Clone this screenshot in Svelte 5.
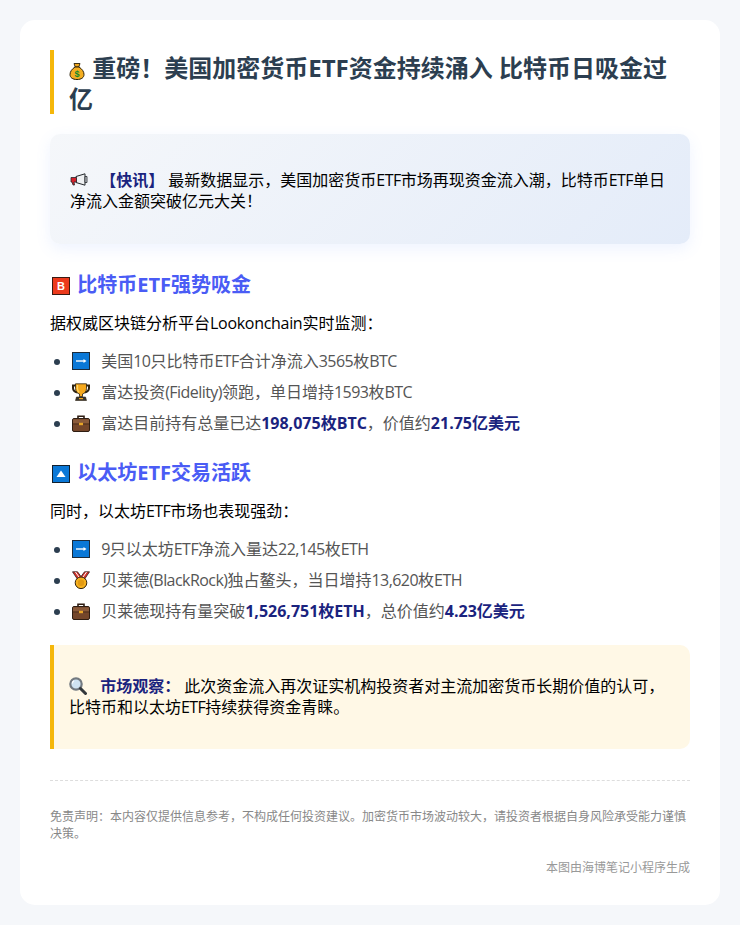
<script>
  const bullets1 = [
    { icon: 'arrow', html: '美国<span class="l">10</span>只比特币<span class="l">ETF</span>合计净流入<span class="l">3565</span>枚<span class="l">BTC</span>' },
    { icon: 'trophy', html: '富达投资<span class="l">(Fidelity)</span>领跑，单日增持<span class="l">1593</span>枚<span class="l">BTC</span>' },
    { icon: 'case', html: '富达目前持有总量已达<strong>198,075枚BTC</strong>，价值约<strong>21.75亿美元</strong>' }
  ];
  const bullets2 = [
    { icon: 'arrow', html: '<span class="l">9</span>只以太坊<span class="l">ETF</span>净流入量达<span class="l">22,145</span>枚<span class="l">ETH</span>' },
    { icon: 'medal', html: '贝莱德<span class="l">(BlackRock)</span>独占鳌头，当日增持<span class="l">13,620</span>枚<span class="l">ETH</span>' },
    { icon: 'case', html: '贝莱德现持有量突破<strong>1,526,751枚ETH</strong>，总价值约<strong>4.23亿美元</strong>' }
  ];
</script>

{#snippet icon(name)}
  {#if name === 'arrow'}
    <svg class="emoji" viewBox="0 0 18 18"><rect x="0.500" y="0.500" width="17" height="17" fill="#0a78d7" stroke="#1c2b3a"/><path d="M4 9h9" stroke="#fff" stroke-width="1.400"/><path d="M11.500 7 14.500 9 11.500 11z" fill="#fff"/></svg>
  {:else if name === 'trophy'}
    <svg class="emoji" viewBox="0 0 18 18"><path d="M4 2.500H1v2.500c0 2.500 2 4 4.500 4.500M14 2.500h3v2.500c0 2.500-2 4-4.500 4.500" fill="none" stroke="#2b2110" stroke-width="2"/><path d="M3.500 .8h11v4.700c0 3-2 5-4 5.500v2.700h-3V11c-2-.5-4-2.500-4-5.500z" fill="#f5a81c" stroke="#2b2110" stroke-width=".8"/><path d="M5.500 2v3.500c0 1.700.7 2.800 1.500 3.700" fill="none" stroke="#ffd766" stroke-width="1.300"/><path d="M4.500 14h9l1 3.500h-11z" fill="#3a3630" stroke="#2b2110" stroke-width=".6"/><path d="M7 15h4v1.200H7z" fill="#f5a81c"/></svg>
  {:else if name === 'case'}
    <svg class="emoji" viewBox="0 0 18 18"><path d="M6 5V2.200h6V5" fill="none" stroke="#2e1d12" stroke-width="1.600"/><rect x="0.500" y="4.500" width="17" height="13" rx="1.500" fill="#74462a" stroke="#2e1d12"/><path d="M1 5.500h16v4H1z" fill="#8a5a3a"/><path d="M1 10h16" stroke="#4e2e1b"/><rect x="7" y="8.800" width="4" height="2.400" fill="#e8a628"/></svg>
  {:else if name === 'medal'}
    <svg class="emoji" viewBox="0 0 18 18"><path d="M.5 .8h5L9 5.500l3.500-4.700h5L12 9H6z" fill="#d8322a" stroke="#2a1d1d" stroke-width=".8"/><path d="M3.500 1 8 7.500M14.500 1 10 7.500" stroke="#fff" stroke-width="1"/><circle cx="9" cy="11.800" r="5.800" fill="#f7b21f" stroke="#33230d"/><circle cx="9" cy="11.800" r="3.200" fill="#e39a12"/></svg>
  {:else if name === 'bag'}
    <svg class="emoji small" viewBox="0 0 16 18"><path d="M5 1.500h6L9.800 5H6.200z" fill="#f0a81f" stroke="#2a2008" stroke-width=".9"/><path d="M6 5h4c3 2 5 4.500 5 7.500 0 3-2.500 5-7 5s-7-2-7-5C1 9.500 3 7 6 5z" fill="#f4ae21" stroke="#2a2008"/><text x="8" y="15" class="dollar" text-anchor="middle">$</text></svg>
  {:else if name === 'horn'}
    <svg class="emoji horn" viewBox="0 0 18 14"><path d="M6 3.500 15 .8v11.400L6 9.500z" fill="#eef0f2" stroke="#23272b"/><path d="M1 4.500h5.500v4.500H4l.5 3H3L2 9H1z" fill="#d4212c" stroke="#23272b" stroke-width=".8"/><path d="M15 3.500h2v6h-2z" fill="#c8cdd2" stroke="#23272b" stroke-width=".8"/></svg>
  {:else if name === 'lens'}
    <svg class="emoji lens" viewBox="0 0 18 18"><circle cx="7" cy="7" r="5.700" fill="#cfe3f2" stroke="#737a80" stroke-width="2.200"/><path d="M5 3.800c-1 .5-1.700 1.500-1.700 2.700" stroke="#fff" fill="none" stroke-width="1.200"/><path d="m11.500 11.500 5 5" stroke="#33383c" stroke-width="3" stroke-linecap="round"/></svg>
  {:else if name === 'b'}
    <svg class="emoji h2e" viewBox="0 0 18 18"><rect x="0.500" y="0.500" width="17" height="17" fill="#ec3a1c" stroke="#3a1a12"/><text x="9" y="13" class="btn" text-anchor="middle">B</text></svg>
  {:else if name === 'up'}
    <svg class="emoji h2e" viewBox="0 0 18 18"><rect x="0.500" y="0.500" width="17" height="17" fill="#0a78d7" stroke="#12202e"/><path d="M9 5.500 13.500 12h-9z" fill="#fff"/></svg>
  {/if}
{/snippet}

<div class="card">
  <h1>{@render icon('bag')} 重磅！美国加密货币ETF资金持续涌入 比特币日吸金过亿</h1>

  <div class="highlight">
    <p>{@render icon('horn')} <strong>【快讯】</strong> 最新数据显示，美国加密货币<span class="l">ETF</span>市场再现资金流入潮，比特币<span class="l">ETF</span>单日净流入金额突破亿元大关！</p>
  </div>

  <h2>{@render icon('b')} 比特币ETF强势吸金</h2>
  <p class="lead">据权威区块链分析平台<span class="lw">Lookonchain</span>实时监测：</p>
  <ul>
    {#each bullets1 as b}
      <li>{@render icon(b.icon)} {@html b.html}</li>
    {/each}
  </ul>

  <h2 class="next">{@render icon('up')} 以太坊ETF交易活跃</h2>
  <p class="lead">同时，以太坊<span class="l">ETF</span>市场也表现强劲：</p>
  <ul>
    {#each bullets2 as b}
      <li>{@render icon(b.icon)} {@html b.html}</li>
    {/each}
  </ul>

  <div class="note">
    <p>{@render icon('lens')} <strong>市场观察：</strong> 此次资金流入再次证实机构投资者对主流加密货币长期价值的认可，比特币和以太坊<span class="l">ETF</span>持续获得资金青睐。</p>
  </div>

  <div class="footer">
    <p>免责声明：本内容仅提供信息参考，不构成任何投资建议。加密货币市场波动较大，请投资者根据自身风险承受能力谨慎决策。</p>
  </div>
  <div class="source">本图由海博笔记小程序生成</div>
</div>

<style>
  :global(body) {
    margin: 0;
    background: #f5f7fa;
    font-family: "Open Sans", "Noto Sans CJK SC", sans-serif;
  }
  .card {
    margin: 20px;
    padding: 30px 30px 29px;
    background: #fff;
    border-radius: 15px;
    color: #333;
    line-height: 1.6;
    font-size: 16px;
  }
  .card :global(strong) {
    color: #1a237e;
    font-weight: 700;
  }
  .card :global(.l) { letter-spacing: -0.55px; }
  .lw { letter-spacing: -0.3px; }
  h1 {
    margin: 0 0 20px;
    padding: 2px 0 0 15px;
    border-left: 4px solid #f5b70a;
    color: #2c3e50;
    font-size: 24px;
    line-height: 31px;
    font-weight: 700;
  }
  .highlight {
    padding: 20px;
    background: linear-gradient(135deg, #f5f7fa 0%, #e4ecf9 100%);
    border-radius: 10px;
    box-shadow: 0 5px 15px rgba(90, 140, 255, 0.1);
    margin-bottom: 25px;
  }
  .highlight p {
    margin: 16px 0 12px;
    color: #000;
    line-height: 21px;
  }
  .note p {
    margin: 16px 0 16px;
    color: #000;
    line-height: 21px;
  }
  h2 {
    margin: 23px 0 9px;
    color: #4a5cf5;
    font-size: 20px;
    line-height: 32px;
    font-weight: 700;
  }
  h2.next { margin-top: 21px; }
  .lead {
    margin: 0 0 12px;
    color: #000;
    line-height: 26px;
  }
  ul {
    margin: 0 0 16px;
    padding-left: 22px;
  }
  li {
    line-height: 26px;
    margin-bottom: 5px;
    color: #555;
  }
  li::marker {
    color: #2c3e50;
  }
  .emoji {
    display: inline-block;
    width: 18px;
    height: 18px;
    vertical-align: -3px;
    margin-right: 7px;
  }
  .small { width: 16px; margin-right: 1px; }
  .horn { height: 14px; vertical-align: -1px; margin-right: 8px; }
  .lens { margin-right: 9px; }
  .h2e { margin-left: 2px; margin-right: 2px; }
  .dollar { font: 700 9px "Liberation Sans", sans-serif; fill: #0f8a2c; }
  .btn { font: 700 11px "Liberation Sans", sans-serif; fill: #fff; }
  .note {
    margin-top: 21px;
    padding: 15px 20px 15px 15px;
    background: #fff8e6;
    border-left: 4px solid #f5b70a;
    border-radius: 0 10px 10px 0;
  }
  .footer {
    margin-top: 31px;
    padding-top: 27px;
    border-top: 1px dashed #ddd;
    color: #888;
    font-size: 12px;
  }
  .footer p { margin: 0; line-height: 17px; }
  .source {
    margin-top: 18px;
    text-align: right;
    color: #999;
    font-size: 12px;
    line-height: 16px;
  }
</style>
